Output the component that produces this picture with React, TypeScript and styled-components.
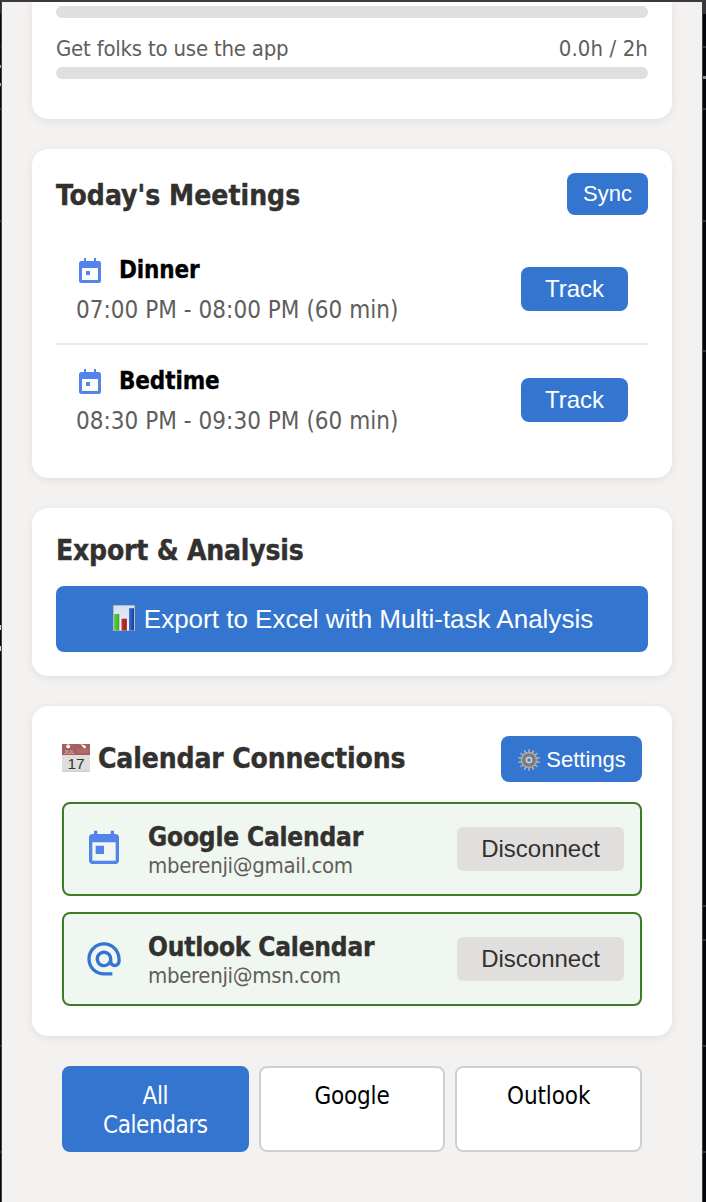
import React from 'react';
import styled, { createGlobalStyle, css } from 'styled-components';

const colors = {
  blue: '#3476cf',
  google: '#5383ec',
  green: '#3a7e27',
  greenTint: '#f0f7f0',
  page: '#f3f2f0',
  neutral: '#e0dfdd',
  text: '#323130',
  muted: '#605e5c',
};

const GlobalStyle = createGlobalStyle`
  *, *::before, *::after { box-sizing: border-box; }
  body {
    margin: 0;
    background: #03060c;
    font-family: "DejaVu Sans Condensed", "DejaVu Sans", sans-serif;
    font-stretch: condensed;
    color: ${colors.text};
  }
`;

const mark = (y: number, h: number, color: string) =>
  `linear-gradient(${color}, ${color}) 0 ${y}px / 100% ${h}px no-repeat`;

const leftMarks = [
  mark(0, 14, '#2c2c2e'), mark(46, 1, '#2e3238'), mark(65, 3, '#a5a7ab'), mark(83, 3, '#a5a7ab'),
  mark(108, 2, '#2e3238'), mark(220, 2, '#2e3238'), mark(625, 5, '#d5d7e0'),
  mark(646, 5, '#d5d7e0'), mark(1045, 2, '#2e3238'), mark(1151, 2, '#2e3238'),
].join(', ');

const rightMarks = [
  mark(0, 14, '#38383a'), mark(46, 2, '#33363b'), mark(76, 3, '#8d8f94'), mark(108, 2, '#33363b'),
  mark(220, 2, '#33363b'), mark(350, 2, '#33363b'), mark(905, 2, '#33363b'), mark(939, 2, '#33363b'),
  mark(1045, 2, '#33363b'), mark(1151, 2, '#33363b'),
].join(', ');

const Desktop = styled.div`
  display: grid;
  grid-template-columns: 1px 702px 1fr;
  width: 706px;
  height: 1202px;
  overflow: hidden;
`;

const Backdrop = styled.div<{ $marks: string }>`
  background: ${(p) => p.$marks}, #03060c;
`;

const Popup = styled.main`
  min-width: 0;
  height: 1202px;
  overflow: hidden;
  background: ${colors.page};
  border-top: 2px solid #3b3939;
  border-left: 1px solid #454547;
  border-right: 1px solid #3e3e40;
  padding: 0 30px;
  display: flex;
  flex-direction: column;
  gap: 30px;
`;

const Card = styled.section<{ $inset?: string; $flush?: boolean }>`
  width: 640px;
  background: #fff;
  border-radius: ${(p) => (p.$flush ? '0 0 16px 16px' : '16px')};
  box-shadow: 0 2px 8px rgba(0, 0, 0, 0.08);
  padding: ${(p) => p.$inset ?? '24px'};
`;

const Track = styled.div`
  height: 12px;
  border-radius: 6px;
  background: ${colors.neutral};
`;

const GoalRow = styled.div`
  display: flex;
  justify-content: space-between;
  margin: 16px 0 3px;
  font-size: 22px;
  line-height: 30px;
  color: ${colors.muted};
`;

const Tracked = styled.span<{ $spacing: number }>`
  letter-spacing: ${(p) => p.$spacing}px;
`;

const CardHeader = styled.header<{ $gap: number }>`
  display: flex;
  align-items: center;
  justify-content: space-between;
  margin-bottom: ${(p) => p.$gap}px;
`;

const Title = styled.h2<{ $drop?: number }>`
  margin: 0;
  padding-top: ${(p) => p.$drop ?? 0}px;
  display: flex;
  align-items: center;
  font-size: 28px;
  font-weight: 700;
  line-height: 36px;
  -webkit-text-stroke: 0.4px currentColor;
`;

const Button = styled.button<{ $size?: 'small' | 'medium' | 'large'; $neutral?: boolean }>`
  display: flex;
  align-items: center;
  justify-content: center;
  flex: none;
  margin: 0;
  border: 0;
  font-family: "Liberation Sans", Arial, sans-serif;
  font-stretch: normal;
  white-space: nowrap;
  border-radius: ${(p) => (p.$neutral ? 6 : 8)}px;
  color: ${(p) => (p.$neutral ? colors.text : '#fff')};
  background: ${(p) => (p.$neutral ? colors.neutral : colors.blue)};
  ${(p) =>
    p.$size === 'small'
      ? css`height: 42px; padding: 0 16px 1px; font-size: 22px;`
      : p.$size === 'large'
        ? css`height: 66px; width: 100%; font-size: 26px; gap: 7px;`
        : css`height: 44px; padding: 0 24px; font-size: 24px;`}
`;

const SyncButton = styled(Button)`
  width: 81px;
`;

const TrackButton = styled(Button)`
  width: 107px;
`;

const DisconnectButton = styled(Button)`
  width: 167px;
`;

const SettingsButton = styled(Button)`
  width: 141px;
  height: 46px;
  padding: 1px 16px 0;
  gap: 5px;
`;

const Meeting = styled.article`
  display: flex;
  align-items: center;
  justify-content: space-between;
  padding: 20px;
  height: 109px;

  & + & {
    height: 111px;
    border-top: 2px solid #eaeaea;
  }
`;

const MeetingName = styled.div`
  display: flex;
  align-items: center;
  gap: 15px;
  font-size: 24px;
  font-weight: 700;
  line-height: 33px;
  color: #000;
  -webkit-text-stroke: 0.3px currentColor;
`;

const MeetingTime = styled.div`
  padding-top: 9px;
  margin-bottom: -2px;
  font-size: 24px;
  line-height: 29px;
  color: ${colors.muted};
`;

const Connections = styled.div`
  display: flex;
  flex-direction: column;
  gap: 16px;
`;

const Connection = styled.article`
  display: flex;
  align-items: center;
  height: 94px;
  padding: 0 16px 0 20px;
  border: 2px solid ${colors.green};
  border-radius: 8px;
  background: ${colors.greenTint};
`;

const Account = styled.div`
  flex: 1;
  margin-left: 24px;
  padding-top: 2px;
`;

const AccountName = styled.div`
  font-size: 26px;
  font-weight: 700;
  line-height: 31px;
  -webkit-text-stroke: 0.4px currentColor;
`;

const AccountEmail = styled.div`
  font-size: 22px;
  line-height: 26px;
  color: ${colors.muted};
`;

const Tabs = styled.nav`
  display: flex;
  gap: 10px;
  width: 580px;
  margin-left: 30px;
`;

const Tab = styled.div<{ $active?: boolean }>`
  flex: 1 1 0;
  min-width: 0;
  height: 86px;
  padding: 14px 36px 10px;
  text-align: center;
  font-size: 24px;
  line-height: 29px;
  border: 2px solid ${(p) => (p.$active ? colors.blue : '#d0d0d0')};
  border-radius: 8px;
  background: ${(p) => (p.$active ? colors.blue : '#fff')};
  color: ${(p) => (p.$active ? '#fff' : '#000')};
`;

const Icon = styled.svg`
  display: block;
  flex: none;
  -webkit-text-stroke: 0;
`;

const TitleIcon = styled(Icon)`
  margin: 0 8px 3px 0;
`;

const MeetingIcon = () => (
  <Icon width="28" height="28" viewBox="0 0 28 28" fill={colors.google}>
    <path
      fillRule="evenodd"
      d="M8 1h2v3h8V1h2v3h2.500a2.500 2.500 0 0 1 2.500 2.500v17a2.500 2.500 0 0 1-2.500 2.500h-17a2.500 2.500 0 0 1-2.500-2.500v-17A2.500 2.500 0 0 1 5.500 4H8zM6 11v12h16V11z"
    />
    <path d="M10 14h4v4h-4z" />
  </Icon>
);

const GoogleIcon = () => (
  <Icon width="40" height="40" viewBox="0 0 24 24" fill={colors.google}>
    <path d="M19 3h-1V1h-2v2H8V1H6v2H5c-1.110 0-1.990.9-1.990 2L3 19c0 1.100.890 2 2 2h14c1.100 0 2-.9 2-2V5c0-1.100-.9-2-2-2zm0 16H5V8h14v11zM7 10h5v5H7z" />
  </Icon>
);

const OutlookIcon = () => (
  <Icon width="40" height="40" viewBox="0 0 24 24" fill={colors.blue}>
    <path d="M12 1.950c-5.520 0-10 4.480-10 10s4.480 10 10 10h5v-2h-5c-4.340 0-8-3.660-8-8s3.660-8 8-8 8 3.660 8 8v1.430c0 .79-.71 1.570-1.500 1.570s-1.500-.78-1.500-1.570v-1.430c0-2.760-2.240-5-5-5s-5 2.240-5 5 2.240 5 5 5c1.380 0 2.640-.56 3.540-1.470.65.890 1.770 1.470 2.960 1.470 1.970 0 3.500-1.600 3.500-3.570v-1.430c0-5.520-4.480-10-10-10zm0 13c-1.660 0-3-1.340-3-3s1.340-3 3-3 3 1.340 3 3-1.340 3-3 3z" />
  </Icon>
);

const ChartIcon = () => (
  <Icon width="26" height="28" viewBox="0 1 26 28">
    <defs>
      <linearGradient id="sheet" x1="0" y1="0" x2="0" y2="1">
        <stop offset="0" stopColor="#d5dfef" />
        <stop offset="1" stopColor="#f2f4f8" />
      </linearGradient>
      <linearGradient id="bar-green"><stop stopColor="#62cf48" /><stop offset="1" stopColor="#41a62d" /></linearGradient>
      <linearGradient id="bar-red"><stop stopColor="#c23a2c" /><stop offset="1" stopColor="#981a12" /></linearGradient>
      <linearGradient id="bar-blue"><stop stopColor="#3d70d0" /><stop offset="1" stopColor="#173f9c" /></linearGradient>
    </defs>
    <rect x="2.300" y="1.300" width="21.400" height="25.400" fill="url(#sheet)" stroke="#b9b6b0" strokeWidth="0.600" />
    <rect x="3" y="10" width="5.300" height="16.500" fill="url(#bar-green)" />
    <rect x="10.500" y="14.700" width="5.300" height="11.800" fill="url(#bar-red)" />
    <rect x="18" y="4.200" width="5" height="22.300" fill="url(#bar-blue)" />
  </Icon>
);

const CalendarEmoji = () => (
  <TitleIcon width="28" height="28" viewBox="0 0 28 28">
    <rect width="28" height="28" fill="#dededd" />
    <rect y="26.500" width="28" height="1.500" fill="#d0d0cf" />
    <rect width="28" height="11" fill="#a65f5f" />
    <path d="M14 5h13v4H16z" fill="#b06c6c" />
    <circle cx="6.200" cy="2.400" r="1.900" fill="#fff" />
    <path d="M5.500 0h1.400v2H5.500z" fill="#ded0d0" />
    <path d="M18.500 0l3.500 4.200c1.700.4 2.500-1 1.700-2.200L21.500 1z" fill="#fff" />
    <text x="2" y="9.800" fontSize="6" fontWeight="400" fontFamily="Liberation Sans, sans-serif" fill="#e0c4c4">JUL</text>
    <text x="14" y="24.800" fontSize="15.500" fontWeight="400" textAnchor="middle" fontFamily="Liberation Sans, sans-serif" fill="#333">17</text>
  </TitleIcon>
);

const teeth = Array.from({ length: 14 }, (_, i) => (i * 360) / 14);

const GearEmoji = () => (
  <Icon width="24" height="24" viewBox="0 0 24 24">
    {teeth.map((a) => (
      <path key={a} d="M11 4.500l.4-3.500h1.200l.4 3.500z" fill="#b0b1b3" transform={`rotate(${a} 12 12)`} />
    ))}
    <circle cx="12" cy="12" r="7.400" fill="#727375" stroke="#a9aaab" strokeWidth="1.600" />
    <circle cx="12" cy="12" r="4.700" fill="#77787a" stroke="#8b8c8e" strokeWidth="1" />
    <circle cx="12" cy="12" r="2.600" fill="#4a78b4" stroke="#d6d7d8" strokeWidth="1.500" />
  </Icon>
);

const meetings = [
  { name: 'Dinner', time: '07:00 PM - 08:00 PM (60 min)' },
  { name: 'Bedtime', time: '08:30 PM - 09:30 PM (60 min)' },
];

const accounts = [
  { name: 'Google Calendar', email: 'mberenji@gmail.com', icon: <GoogleIcon /> },
  { name: 'Outlook Calendar', email: 'mberenji@msn.com', icon: <OutlookIcon /> },
];

export default function App() {
  return (
    <>
      <GlobalStyle />
      <Desktop>
        <Backdrop $marks={leftMarks} />
        <Popup>
          <Card $flush $inset="4px 24px 40px">
            <Track />
            <GoalRow>
              <Tracked $spacing={-0.22}>Get folks to use the app</Tracked>
              <Tracked $spacing={0.1}>0.0h / 2h</Tracked>
            </GoalRow>
            <Track />
          </Card>

          <Card>
            <CardHeader $gap={19}>
              <Title $drop={4}><Tracked $spacing={0.03}>Today's Meetings</Tracked></Title>
              <SyncButton $size="small">Sync</SyncButton>
            </CardHeader>
            {meetings.map((m) => (
              <Meeting key={m.name}>
                <div>
                  <MeetingName><MeetingIcon /><Tracked $spacing={-0.12}>{m.name}</Tracked></MeetingName>
                  <MeetingTime><Tracked $spacing={0.03}>{m.time}</Tracked></MeetingTime>
                </div>
                <TrackButton>Track</TrackButton>
              </Meeting>
            ))}
          </Card>

          <Card>
            <CardHeader $gap={17}>
              <Title $drop={1}><Tracked $spacing={-0.2}>Export &amp; Analysis</Tracked></Title>
            </CardHeader>
            <Button $size="large"><ChartIcon />Export to Excel with Multi-task Analysis</Button>
          </Card>

          <Card $inset="30px">
            <CardHeader $gap={20}>
              <Title><CalendarEmoji /><Tracked $spacing={-0.13}>Calendar Connections</Tracked></Title>
              <SettingsButton $size="small"><GearEmoji />Settings</SettingsButton>
            </CardHeader>
            <Connections>
              {accounts.map((a) => (
                <Connection key={a.name}>
                  {a.icon}
                  <Account>
                    <AccountName><Tracked $spacing={-0.17}>{a.name}</Tracked></AccountName>
                    <AccountEmail><Tracked $spacing={-0.33}>{a.email}</Tracked></AccountEmail>
                  </Account>
                  <DisconnectButton $neutral>Disconnect</DisconnectButton>
                </Connection>
              ))}
            </Connections>
          </Card>

          <Tabs>
            <Tab $active><Tracked $spacing={-0.4}>All Calendars</Tracked></Tab>
            <Tab><Tracked $spacing={-0.2}>Google</Tracked></Tab>
            <Tab><Tracked $spacing={-0.1}>Outlook</Tracked></Tab>
          </Tabs>
        </Popup>
        <Backdrop $marks={rightMarks} />
      </Desktop>
    </>
  );
}
